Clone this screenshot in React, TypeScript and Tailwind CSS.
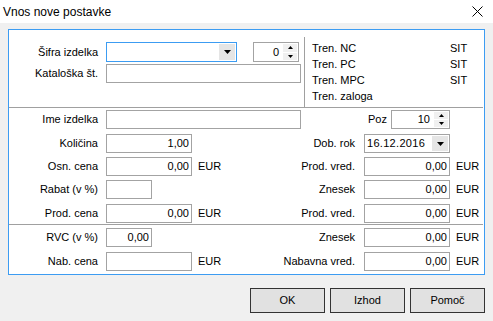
import React from "react";

const font = { fontFamily: '"Liberation Sans", Arial, sans-serif' };

function DownTri({ w = 7, h = 4 }: { w?: number; h?: number }) {
  return (
    <svg width={w} height={h} viewBox={`0 0 ${w} ${h}`}>
      <polygon points={`0,0 ${w},0 ${w / 2},${h}`} fill="#000" />
    </svg>
  );
}
function UpTri({ w = 5, h = 3 }: { w?: number; h?: number }) {
  return (
    <svg width={w} height={h} viewBox={`0 0 ${w} ${h}`}>
      <polygon points={`0,${h} ${w},${h} ${w / 2},0`} fill="#000" />
    </svg>
  );
}

function Input({ w, value, h = 19 }: { w: number; value?: string; h?: number }) {
  return (
    <div
      className="shrink-0 border border-[#a3a3a3] bg-white flex items-center justify-end pr-[2px]"
      style={{ width: w, height: h }}
    >
      {value}
    </div>
  );
}

function Spinner({ w, value, h = 19 }: { w: number; value: string; h?: number }) {
  return (
    <div
      className="shrink-0 border border-[#a3a3a3] bg-white flex items-stretch"
      style={{ width: w, height: h }}
    >
      <div className="flex-1 flex items-center justify-end pr-[4px]">{value}</div>
      <div className="w-[15px] flex flex-col gap-[1px] py-[1px] pr-[1px]">
        <div className="flex-1 bg-[#f0f0f0] flex items-center justify-center">
          <UpTri />
        </div>
        <div className="flex-1 bg-[#f0f0f0] flex items-center justify-center">
          <DownTri w={5} h={3} />
        </div>
      </div>
    </div>
  );
}

function LeftLabel({ children }: { children: React.ReactNode }) {
  return (
    <div className="w-[89px] shrink-0 flex justify-end whitespace-nowrap mr-[8px]">{children}</div>
  );
}

function RightField({ label, value }: { label: string; value: string }) {
  return (
    <div className="flex items-center">
      <div className="w-[54px] shrink-0 flex justify-end whitespace-nowrap mr-[9px]">{label}</div>
      <Input w={86} value={value} />
      <div className="ml-[6px]">EUR</div>
    </div>
  );
}

function Eur() {
  return <div className="ml-[6px]">EUR</div>;
}

export default function App() {
  return (
    <div className="w-[493px] h-[321px] bg-[#f0f0f0] text-[11px] text-black overflow-hidden" style={font}>
      {/* Title bar */}
      <div className="h-[23px] bg-white flex items-center justify-between pl-[3px] pr-[10px]">
        <div className="text-[12px] leading-none">Vnos nove postavke</div>
        <svg width="11" height="11" viewBox="0 0 11 11">
          <path d="M0.5 0.5 L10.5 10.5 M10.5 0.5 L0.5 10.5" stroke="#000" strokeWidth="1" />
        </svg>
      </div>

      {/* Panel */}
      <div className="ml-[8px] mt-[6px] w-[477px] border border-[#3c9cf2] bg-white flex flex-col">
        {/* Top section */}
        <div className="h-[77px] flex">
          <div className="w-[295px] shrink-0 pt-[12px]">
            <div className="flex items-center h-[20px]">
              <LeftLabel>Šifra izdelka</LeftLabel>
              <div className="w-[131px] h-[20px] shrink-0 border border-[#3c9cf2] bg-white flex justify-end p-[1px]">
                <div className="w-[16px] bg-[#e5e5e5] flex items-center justify-center">
                  <DownTri />
                </div>
              </div>
              <div className="ml-[16px]">
                <Spinner w={46} h={20} value="0" />
              </div>
            </div>
            <div className="flex items-center h-[19px] mt-[2px]">
              <LeftLabel>Kataloška št.</LeftLabel>
              <Input w={195} />
            </div>
          </div>
          <div className="mt-[7px] flex-1 border-l border-[#a0a0a0] pl-[7px] pt-[3px] leading-[16px]">
            {[
              ["Tren. NC", "SIT"],
              ["Tren. PC", "SIT"],
              ["Tren. MPC", "SIT"],
              ["Tren. zaloga", ""],
            ].map(([a, b]) => (
              <div key={a} className="flex h-[16px]">
                <div className="w-[138px] shrink-0">{a}</div>
                <div>{b}</div>
              </div>
            ))}
          </div>
        </div>
        <div className="h-[1px] bg-[#a0a0a0] mr-[1px]" />

        {/* Middle section */}
        <div className="h-[116px] pt-[2px]">
          <div className="flex items-center h-[19px]">
            <div className="w-[292px] shrink-0 flex items-center">
              <LeftLabel>Ime izdelka</LeftLabel>
              <Input w={195} />
            </div>
            <div className="w-[86px] shrink-0 flex justify-end mr-[4px]">Poz</div>
            <Spinner w={59} value="10" />
          </div>
          <div className="flex items-center h-[19px] mt-[5px]">
            <div className="w-[292px] shrink-0 flex items-center">
              <LeftLabel>Količina</LeftLabel>
              <Input w={86} value="1,00" />
            </div>
            <div className="w-[54px] shrink-0 flex justify-end whitespace-nowrap mr-[9px]">Dob. rok</div>
            <div className="w-[86px] h-[19px] border border-[#a3a3a3] bg-white flex items-stretch">
              <div className="flex-1 flex items-center pl-[2px] tracking-[0.3px]">16.12.2016</div>
              <div className="w-[16px] my-[1px] mr-[1px] bg-[#e5e5e5] flex items-center justify-center">
                <DownTri />
              </div>
            </div>
          </div>
          <div className="flex items-center h-[19px] mt-[4px]">
            <div className="w-[292px] shrink-0 flex items-center">
              <LeftLabel>Osn. cena</LeftLabel>
              <Input w={86} value="0,00" />
              <Eur />
            </div>
            <RightField label="Prod. vred." value="0,00" />
          </div>
          <div className="flex items-center h-[19px] mt-[4px]">
            <div className="w-[292px] shrink-0 flex items-center">
              <LeftLabel>Rabat (v %)</LeftLabel>
              <Input w={46} />
            </div>
            <RightField label="Znesek" value="0,00" />
          </div>
          <div className="flex items-center h-[19px] mt-[5px]">
            <div className="w-[292px] shrink-0 flex items-center">
              <LeftLabel>Prod. cena</LeftLabel>
              <Input w={86} value="0,00" />
              <Eur />
            </div>
            <RightField label="Prod. vred." value="0,00" />
          </div>
        </div>
        <div className="h-[1px] bg-[#a0a0a0] mr-[1px]" />

        {/* Bottom section */}
        <div className="h-[49px] pt-[3px]">
          <div className="flex items-center h-[19px]">
            <div className="w-[292px] shrink-0 flex items-center">
              <LeftLabel>RVC (v %)</LeftLabel>
              <Input w={46} value="0,00" />
            </div>
            <RightField label="Znesek" value="0,00" />
          </div>
          <div className="flex items-center h-[19px] mt-[5px]">
            <div className="w-[292px] shrink-0 flex items-center">
              <LeftLabel>Nab. cena</LeftLabel>
              <Input w={86} />
              <Eur />
            </div>
            <RightField label="Nabavna vred." value="0,00" />
          </div>
        </div>
      </div>

      {/* Buttons */}
      <div className="flex justify-end gap-[5px] pr-[8px] mt-[13px]">
        {["OK", "Izhod", "Pomoč"].map((b) => (
          <div
            key={b}
            className="w-[75px] h-[25px] border border-[#333333] bg-[#e1e1e1] flex items-center justify-center"
          >
            {b}
          </div>
        ))}
      </div>
    </div>
  );
}
